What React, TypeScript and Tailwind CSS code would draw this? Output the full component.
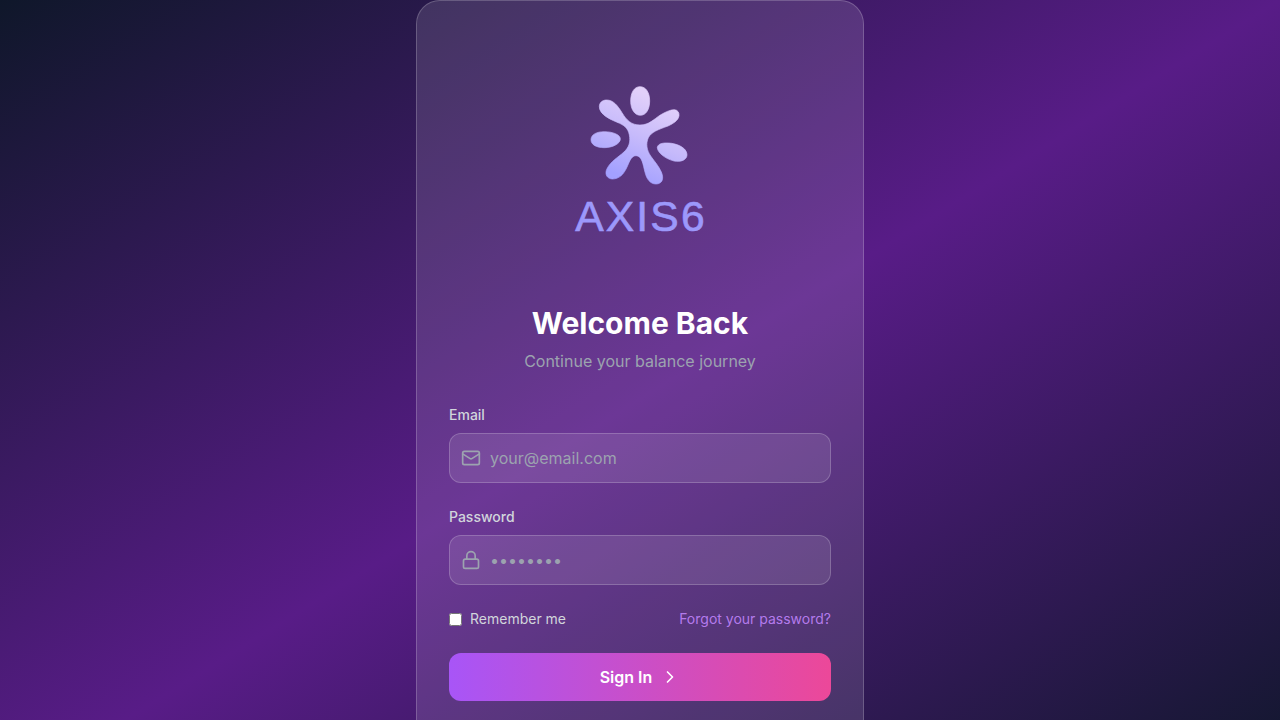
import { ChevronRight, Lock, Mail } from "lucide-react";
import type { ComponentProps, ReactNode } from "react";

function Logo() {
  return (
    <svg viewBox="0 0 768 768" className="mx-auto mb-4 size-64" role="img" aria-label="AXIS6">
      <defs>
        <linearGradient id="petals" gradientUnits="userSpaceOnUse" x1="270" y1="90" x2="170" y2="325">
          <stop offset="0" stopColor="#e2d0fa" />
          <stop offset="0.5" stopColor="#c6bafb" />
          <stop offset="1" stopColor="#a3a0ff" />
        </linearGradient>
      </defs>
      <g transform="translate(174 111)">
        <g fill="url(#petals)" stroke="url(#petals)" strokeWidth="2">
          <path d="M210 50C228 50 239 68 239 93C239 118 228 136 211 136C194 136 182 118 182 93C182 67 193 50 210 50Z" />
          <path d="M63 209C63 194 79 185 103 185C128 185 151 194 151 207C151 221 128 233 103 233C79 233 63 224 63 209Z" />
          <path d="M262 232C264 220 281 217 305 220C334 225 351 239 351 255C350 270 333 277 312 273C284 266 261 246 262 232Z" />
          <path d="M110 90C130 90 143 107 156 128C170 151 184 165 210 165C237 165 251 148 271 135C288 125 302 119 313 119C323 120 328 127 327 137C325 151 311 160 294 168C264 179 244 186 235 203C227 221 230 240 242 258C255 276 266 288 274 306C283 327 276 342 258 342C240 342 230 327 225 307C219 283 216 257 198 257C181 257 177 282 166 301C156 319 142 327 127 327C112 326 105 315 109 301C116 281 136 267 155 252C174 237 181 222 179 202C177 180 168 169 149 160C125 150 88 135 88 110C88 98 97 90 110 90Z" />
        </g>
      </g>
      <text
        x="387"
        y="594"
        textAnchor="middle"
        fill="#9c98fb"
        stroke="#9c98fb"
        strokeWidth="2"
        className="font-['Liberation_Sans',sans-serif] text-[128px] tracking-wider"
      >
        AXIS6
      </text>
    </svg>
  );
}

type FieldProps = ComponentProps<"input"> & { id: string; label: string; icon: ReactNode };

function Field({ id, label, icon, ...input }: FieldProps) {
  return (
    <div>
      <label htmlFor={id} className="mb-2 block text-sm font-medium text-[#d1d5db]">
        {label}
      </label>
      <div className="relative">
        <span className="pointer-events-none absolute inset-y-0 left-3 flex items-center text-[#9ca3af]">{icon}</span>
        <input
          id={id}
          className="block w-full rounded-xl border border-white/20 bg-white/10 py-3 pr-4 pl-10 text-base text-white placeholder:text-[#9ca3af]"
          {...input}
        />
      </div>
    </div>
  );
}

export default function App() {
  return (
    <main className="flex min-h-screen items-center justify-center bg-[linear-gradient(to_bottom_right,#0f172a,#581c87,#0f172a)] font-['Inter',sans-serif]">
      <section className="w-full max-w-md rounded-3xl border border-white/20 bg-[#f5f0ff]/13 px-8 pt-8 pb-24">
        <Logo />
        <header className="mb-8 text-center">
          <h1 className="mb-2 text-3xl font-bold text-white">Welcome Back</h1>
          <p className="text-base text-[#9ca3af]">Continue your balance journey</p>
        </header>
        <form className="space-y-6" onSubmit={(event) => event.preventDefault()}>
          <Field id="email" type="email" label="Email" placeholder="your@email.com" icon={<Mail className="size-5" />} />
          <Field id="password" type="password" label="Password" placeholder="••••••••" icon={<Lock className="size-5" />} />
          <div className="flex items-center justify-between text-sm">
            <label className="flex items-center text-[#d1d5db]">
              <input type="checkbox" className="mr-2" />
              Remember me
            </label>
            <a href="#forgot" className="text-[#c084fc]/90">
              Forgot your password?
            </a>
          </div>
          <button
            type="submit"
            className="flex w-full items-center justify-center gap-2 rounded-xl bg-[linear-gradient(to_right,#a855f7,#ec4899)] py-3 text-base font-semibold text-white"
          >
            Sign In
            <ChevronRight className="size-5" />
          </button>
        </form>
      </section>
    </main>
  );
}
